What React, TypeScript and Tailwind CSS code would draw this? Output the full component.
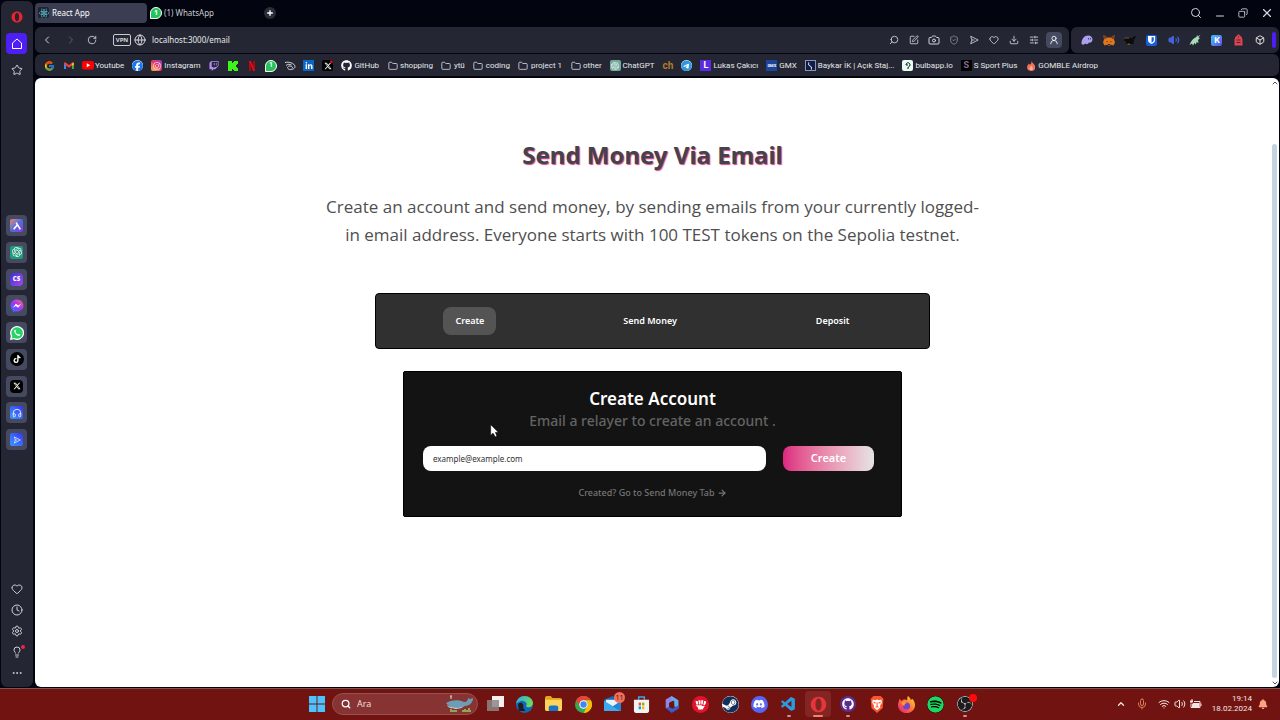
import type { ReactNode } from "react";
import { twMerge } from "tailwind-merge";
import {
  ArrowRight,
  Box,
  Camera,
  ChevronDown,
  ChevronLeft,
  ChevronRight,
  ChevronUp,
  Clock,
  Copy,
  Download,
  Ellipsis,
  Folder,
  Globe,
  Headphones,
  Heart,
  Lightbulb,
  Mic,
  Minus,
  Plus,
  RotateCw,
  Search,
  Settings,
  ShieldCheck,
  SlidersHorizontal,
  SquarePen,
  Star,
  UserRound,
  Volume2,
  Wifi,
  X,
} from "lucide-react";
import {
  FaBell,
  FaDiscord,
  FaFacebook,
  FaGithub,
  FaInstagram,
  FaLinkedinIn,
  FaReact,
  FaSpotify,
  FaSteam,
  FaTelegram,
  FaTiktok,
  FaTwitch,
  FaXTwitter,
} from "react-icons/fa6";
import { FcGoogle } from "react-icons/fc";
import { SiObsstudio, SiOpenai } from "react-icons/si";
import { VscVscode } from "react-icons/vsc";

function OperaLogo({ className }: { className: string }) {
  return (
    <svg viewBox="0 0 24 24" className={className}>
      <path
        fillRule="evenodd"
        fill="currentColor"
        d="M12 1C5.900 1 1 5.900 1 12s4.900 11 11 11 11-4.900 11-11S18.100 1 12 1Zm0 2.500c2.700 0 4.300 3.600 4.300 8.500s-1.600 8.500-4.300 8.500S7.700 16.900 7.700 12 9.300 3.500 12 3.500Z"
      />
    </svg>
  );
}

function WhatsAppBadge() {
  return (
    <span className="flex size-3 shrink-0 items-center justify-center rounded-full rounded-bl-sm border border-white bg-[#25c45a] text-[7px] leading-none font-bold text-white">
      1
    </span>
  );
}

function HomeIcon() {
  return (
    <svg viewBox="0 0 24 24" className="size-3" fill="none" stroke="currentColor" strokeWidth="2" strokeLinejoin="round">
      <path d="M12 2 3 10v11h18V10z" />
    </svg>
  );
}

function FlowIcon({ className }: { className: string }) {
  return (
    <svg viewBox="0 0 24 24" className={className} fill="none" stroke="currentColor" strokeWidth="2" strokeLinejoin="round">
      <path d="m4 3 18 9L4 21l3-9z" />
      <path d="M7 12h6" />
    </svg>
  );
}

function Gmail() {
  return (
    <svg viewBox="0 0 24 18" className="w-2.5">
      <path fill="#4285f4" d="M0 2v15h5V8z" />
      <path fill="#34a853" d="M24 2v15h-5V8z" />
      <path fill="#ea4335" d="M0 2.500 2.500 0 12 7l9.500-7L24 2.500V5l-12 9L0 5z" />
      <path fill="#fbbc04" d="m19 4 3-3 2 2v3l-5 4z" />
    </svg>
  );
}

function Youtube() {
  return (
    <svg viewBox="0 0 24 17" className="w-3 shrink-0">
      <rect width="24" height="17" rx="4" fill="#f00" />
      <path d="m9.500 4.500 7 4-7 4z" fill="#fff" />
    </svg>
  );
}

function Kick() {
  return (
    <svg viewBox="0 0 10 10" className="size-2.5">
      <path fill="#3df51a" d="M0 0h4v2h1V1h1V0h4v3H9v1H8v2h1v1h1v3H6V9H5V8H4v2H0z" />
    </svg>
  );
}

function Netflix() {
  return (
    <svg viewBox="0 0 12 20" className="h-2.5">
      <path fill="#b1060f" d="M0 0h4v20H0zM8 0h4v20H8z" />
      <path fill="#e50914" d="M0 0h4l8 20H8z" />
    </svg>
  );
}

function CloudScribble() {
  return (
    <svg viewBox="0 0 24 24" className="size-3 shrink-0" fill="none" stroke="#d8dae0" strokeWidth="2">
      <path d="M2 5c7-2 19 1 20 8 0 5-9 8-13 5s-1-6 3-6 6 3 4 5M4 11c3-3 8-3 11-1" />
    </svg>
  );
}

function Flame() {
  return (
    <svg viewBox="0 0 20 24" className="h-2.5">
      <path fill="#f2705b" d="M11 0c1 5 9 8 9 15s-5 9-10 9S0 21 0 15c0-4 3-6 4-9l3 3c3-2 4-5 4-9Z" />
      <path fill="#ffb18f" d="M10 11c1 3 4 4 4 7s-2 4-4 4-4-1-4-4 3-4 4-7Z" />
    </svg>
  );
}

function Tile({ className, children }: { className: string; children?: ReactNode }) {
  return (
    <span
      className={twMerge("flex size-[11px] shrink-0 items-center justify-center overflow-hidden rounded-xs", className)}
    >
      {children}
    </span>
  );
}

const folderIcon = <Folder className="size-2.5 text-[#d5d7dd]" />;

const bookmarks: { name: string; label?: string; icon: ReactNode }[] = [
  { name: "Google", icon: <FcGoogle className="size-3" /> },
  { name: "Gmail", icon: <Gmail /> },
  { name: "Youtube", label: "Youtube", icon: <Youtube /> },
  { name: "Facebook", icon: <Tile className="rounded-full bg-white text-[#1877f2]"><FaFacebook className="size-3" /></Tile> },
  {
    name: "Instagram",
    label: "Instagram",
    icon: (
      <Tile className="bg-linear-to-tr from-[#fdbb2d] via-[#e8305f] to-[#8a35c9] text-white">
        <FaInstagram className="size-2" />
      </Tile>
    ),
  },
  { name: "Twitch", icon: <FaTwitch className="size-2.5 text-[#b58cf5]" /> },
  { name: "Kick", icon: <Kick /> },
  { name: "Netflix", icon: <Netflix /> },
  { name: "WhatsApp", icon: <WhatsAppBadge /> },
  { name: "Cloud", icon: <CloudScribble /> },
  { name: "LinkedIn", icon: <Tile className="rounded-none bg-[#0a66c2] text-white"><FaLinkedinIn className="size-2" /></Tile> },
  {
    name: "X",
    icon: (
      <Tile className="relative bg-black text-white">
        <FaXTwitter className="size-2" />
        <i className="absolute top-0 right-0 size-[3px] rounded-full bg-red-600" />
      </Tile>
    ),
  },
  { name: "GitHub", label: "GitHub", icon: <FaGithub className="size-[11px] text-white" /> },
  { name: "shopping", label: "shopping", icon: folderIcon },
  { name: "ytü", label: "ytü", icon: folderIcon },
  { name: "coding", label: "coding", icon: folderIcon },
  { name: "project 1", label: "project 1", icon: folderIcon },
  { name: "other", label: "other", icon: folderIcon },
  { name: "ChatGPT", label: "ChatGPT", icon: <Tile className="bg-[#74aa9c] text-white"><SiOpenai className="size-2" /></Tile> },
  { name: "ch", icon: <span className="text-[10px] leading-none font-bold text-[#b57a2c]">ch</span> },
  { name: "Telegram", icon: <Tile className="rounded-full bg-white text-[#2f96e0]"><FaTelegram className="size-3" /></Tile> },
  { name: "Lukas Çakıcı", label: "Lukas Çakıcı", icon: <Tile className="rounded-none bg-[#5b2be0] text-[9px] font-bold text-white">L</Tile> },
  { name: "GMX", label: "GMX", icon: <Tile className="rounded-none bg-[#1c449b] text-[4px] font-bold text-white">GMX</Tile> },
  {
    name: "Baykar",
    label: "Baykar İK | Açık Staj...",
    icon: (
      <Tile className="rounded-none border border-[#8d95ad] bg-[#0e1c48]">
        <svg viewBox="0 0 10 10" className="size-2.5" fill="none" stroke="#fff">
          <path d="M3 1v3l3 2v3" />
        </svg>
      </Tile>
    ),
  },
  {
    name: "bulbapp.io",
    label: "bulbapp.io",
    icon: (
      <Tile className="bg-[#e9fbf5]">
        <svg viewBox="0 0 10 10" className="size-2.5" fill="none" stroke="#0b1512">
          <path d="M3 4c0-3 4-3 4 0 0 2-2 1-2 3v1M3 4h2" />
        </svg>
      </Tile>
    ),
  },
  { name: "S Sport Plus", label: "S Sport Plus", icon: <Tile className="rounded-none bg-black text-[9px] font-bold text-[#8b6c96]">S</Tile> },
  { name: "GOMBLE Airdrop", label: "GOMBLE Airdrop", icon: <Flame /> },
];

const sideApps: { name: string; icon: ReactNode }[] = [
  {
    name: "Aria",
    icon: (
      <Tile className="size-[13px] bg-linear-to-br from-[#f27a4f] via-[#4d6ae0] to-[#8a2be2]">
        <svg viewBox="0 0 12 12" className="size-2.5" fill="none" stroke="#fff" strokeWidth="2">
          <path d="m5 2 5 8M7 4l-5 6" />
        </svg>
      </Tile>
    ),
  },
  { name: "ChatGPT", icon: <Tile className="size-[13px] bg-[#1f9a7b] text-white"><SiOpenai className="size-2.5" /></Tile> },
  {
    name: "ChatSonic",
    icon: (
      <Tile className="size-[13px] rounded-sm bg-linear-to-br from-[#3a2bd8] to-[#a545e8] text-[6px] font-black text-white">CS</Tile>
    ),
  },
  {
    name: "Messenger",
    icon: (
      <svg viewBox="0 0 24 24" className="size-3.5">
        <defs>
          <linearGradient id="messenger" x1="0" y1="1" x2="1" y2="0">
            <stop offset="0" stopColor="#1684ff" />
            <stop offset="0.500" stopColor="#a033ff" />
            <stop offset="1" stopColor="#ff6a68" />
          </linearGradient>
        </defs>
        <path fill="url(#messenger)" d="M12 1C5.500 1 1 5.700 1 11.500c0 3.500 1.500 6 4 8V23l3.500-2c1 .3 2.200.5 3.500.5 6.500 0 11-4.500 11-10S18.500 1 12 1Z" />
        <path d="m5 15 5-7 4 3 5-3-5 7-4-3z" fill="#fff" />
      </svg>
    ),
  },
  {
    name: "WhatsApp",
    icon: (
      <svg viewBox="0 0 28 28" className="size-3.5">
        <path fill="#fff" d="M14 0a14 14 0 1 1-6 26.500L0 28l1.500-8A14 14 0 0 1 14 0Z" />
        <path fill="#25d366" d="M14 2.500a11.500 11.500 0 1 1-5.500 21.500L3.500 25l1-5A11.500 11.500 0 0 1 14 2.500Z" />
        <path fill="#fff" d="M9 8c1-1 2-1 3 2 0 1-1 1-1 2 1 2 3 4 5 5 1 0 1-1 2-1 3 1 3 2 2 3-4 4-14-6-11-11Z" />
      </svg>
    ),
  },
  { name: "TikTok", icon: <Tile className="size-3.5 rounded-full bg-black text-white"><FaTiktok className="size-2" /></Tile> },
  { name: "X", icon: <Tile className="size-[13px] rounded-sm bg-black text-white"><FaXTwitter className="size-2" /></Tile> },
  { name: "Player", icon: <Tile className="size-[13px] bg-linear-to-tr from-[#3f96ff] to-[#3b28f0] text-white"><Headphones className="size-2.5" /></Tile> },
  { name: "Flow", icon: <Tile className="size-[13px] bg-linear-to-tr from-[#3f96ff] to-[#3b28f0] text-white"><FlowIcon className="size-2" /></Tile> },
];

function Sidebar() {
  return (
    <aside className="mt-px flex w-8 shrink-0 flex-col items-center rounded-md bg-[#242733] pr-px text-[#cfd1d8]">
      <button aria-label="Opera" className="mt-2.5">
        <OperaLogo className="size-3 text-[#f0222e]" />
      </button>
      <button aria-label="Home" className="mt-2.5 flex size-[21px] items-center justify-center rounded-sm bg-[#4d1ff5] text-white">
        <HomeIcon />
      </button>
      <button aria-label="Favourites" className="mt-2.5">
        <Star className="size-3" />
      </button>
      <nav aria-label="Apps" className="mt-[139px] flex h-[235px] flex-col justify-between">
        {sideApps.map((app) => (
          <button key={app.name} aria-label={app.name} className="flex size-[21px] items-center justify-center rounded-sm bg-[#464a60]">
            {app.icon}
          </button>
        ))}
      </nav>
      <div className="mt-auto mb-2 flex flex-col items-center gap-[9px]">
        <button aria-label="Likes"><Heart className="size-3" /></button>
        <button aria-label="History"><Clock className="size-3" /></button>
        <button aria-label="Settings"><Settings className="size-3" /></button>
        <button aria-label="Tips" className="relative">
          <Lightbulb className="size-3" />
          <span className="absolute -top-px -right-0.5 size-1 rounded-full bg-[#fa1e4e]" />
        </button>
        <button aria-label="More"><Ellipsis className="size-3" /></button>
      </div>
    </aside>
  );
}

function TabBar() {
  return (
    <div className="flex h-[25px] items-center text-[8px] text-[#c9cbd2]">
      <button className="flex h-5 w-28 items-center gap-[3px] rounded-sm bg-[#3b3e52] px-[3px] text-white">
        <Tile className="bg-[#20232a] text-[#61dafb]"><FaReact className="size-2.5" /></Tile>
        React App
      </button>
      <button className="flex w-28 items-center gap-0.5 px-[3px]">
        <WhatsAppBadge />
        (1) WhatsApp
      </button>
      <button aria-label="New tab" className="ml-[5px] flex size-3 items-center justify-center rounded-full bg-[#2a2d38] text-white">
        <Plus className="size-2" strokeWidth={4} />
      </button>
      <div className="ml-auto flex items-center gap-3 pr-[5px] text-[#d5d7dd]">
        <button aria-label="Search tabs"><Search className="size-3" /></button>
        <button aria-label="Minimize"><Minus className="mt-1.5 size-3" /></button>
        <button aria-label="Restore"><Copy className="size-2.5 rotate-90" /></button>
        <button aria-label="Close"><X className="size-3.5" strokeWidth={2} /></button>
      </div>
    </div>
  );
}

const pageActions = [
  { name: "Zoom", icon: <Search className="size-2.5 -scale-x-100" /> },
  { name: "Edit", icon: <SquarePen className="size-2.5" /> },
  { name: "Snapshot", icon: <Camera className="size-3" /> },
  { name: "Shield", icon: <ShieldCheck className="size-2.5 text-[#8f929c]" /> },
  { name: "Flow", icon: <FlowIcon className="size-2.5" /> },
  { name: "Heart", icon: <Heart className="size-2.5" /> },
  { name: "Downloads", icon: <Download className="size-2.5" /> },
  { name: "Easy setup", icon: <SlidersHorizontal className="size-2.5" /> },
];

const extensions = [
  {
    name: "Phantom",
    icon: (
      <svg viewBox="0 0 24 20" className="w-3">
        <path fill="#ab9ff2" d="M1 17C1 8 7 1 14 1c6 0 9 4 9 8 0 5-4 7-7 6-2 3-5 5-7 2-3 3-8 3-8 0Z" />
        <path d="M15 6v3m4-3v3" stroke="#242733" strokeWidth="1.500" />
      </svg>
    ),
  },
  {
    name: "MetaMask",
    icon: (
      <svg viewBox="0 0 24 22" className="w-3">
        <path fill="#e2761b" d="m1 0 8 5h6l8-5-1 9 2 6-3 6-6-2-1 2h-4l-1-2-6 2-3-6 2-6z" />
        <path fill="#763d16" d="m1 0 8 5-6 4zm22 0-8 5 6 4z" />
        <path fill="#233447" d="m6 12 4 1-1 2zm12 0-4 1 1 2zM10 18h4v2h-4z" />
      </svg>
    ),
  },
  {
    name: "Pot",
    icon: (
      <svg viewBox="0 0 24 20" className="w-3">
        <path fill="#0c0c0e" d="M2 6h14l7-5v5l-3 3-1 9H5L3 12H0z" />
        <path fill="#8a4a22" d="M1 5h9v2H1zM7 17h5v3H7z" />
      </svg>
    ),
  },
  {
    name: "Bitwarden",
    icon: (
      <Tile className="bg-[#175ddc]">
        <svg viewBox="0 0 16 18" className="h-2">
          <path fill="#fff" d="M0 0h16v9c0 5-4 7-8 9-4-2-8-4-8-9z" />
          <path fill="#175ddc" d="M8 3h5v6c0 3-2 4-5 6z" />
        </svg>
      </Tile>
    ),
  },
  { name: "Volume", icon: <Volume2 className="size-3 fill-[#4662d8] text-[#4662d8]" /> },
  {
    name: "Rabbit",
    icon: (
      <svg viewBox="0 0 24 24" className="size-3">
        <path fill="#a6dcb8" d="m23 1-5 4-2-3-1 4C8 9 4 14 1 22l5-3 2 4 3-5 3 3 1-5 4 2-1-6 4-4-3-1z" />
      </svg>
    ),
  },
  { name: "Keplr", icon: <Tile className="bg-linear-to-br from-[#3bc5f7] to-[#5a44e8] text-[9px] font-bold text-white">K</Tile> },
  {
    name: "Tag",
    icon: (
      <svg viewBox="0 0 18 24" className="h-3">
        <path fill="#d94652" d="m9 0 7 7v3h1v13H1V10h1V7z" />
        <path d="M5 12h8M5 17h8M9 5v2" stroke="#5c1c28" strokeWidth="2" />
      </svg>
    ),
  },
  { name: "Extensions", icon: <Box className="size-2.5 text-white" /> },
];

function AddressBar() {
  return (
    <div className="mt-0.5 flex h-[26px] gap-0.5 text-[#d5d7dd]">
      <div className="flex flex-1 items-center rounded-md bg-[#242733] pr-[7px]">
        <button aria-label="Back" className="ml-1.5"><ChevronLeft className="size-3" /></button>
        <button aria-label="Forward" className="ml-3 text-[#5f626e]"><ChevronRight className="size-3" /></button>
        <button aria-label="Reload" className="ml-2.5"><RotateCw className="size-2.5" /></button>
        <span className="ml-4 flex h-3 w-[18px] items-center justify-center rounded-xs border border-[#c8cad2] text-[6px] font-bold">VPN</span>
        <Globe className="ml-[3px] size-3" strokeWidth={2} />
        <input
          aria-label="Address"
          defaultValue="localhost:3000/email"
          className="ml-1.5 min-w-0 flex-1 bg-transparent text-[8px] text-[#e6e7eb] outline-none"
        />
        <div className="flex items-center">
          {pageActions.map((action) => (
            <button key={action.name} aria-label={action.name} className="flex w-5 justify-center">
              {action.icon}
            </button>
          ))}
          <button aria-label="Profile" className="ml-0.5 flex size-4 items-center justify-center rounded-sm bg-[#464a60] text-white">
            <UserRound className="size-2.5" />
          </button>
        </div>
      </div>
      <div className="flex w-[208px] items-center justify-between rounded-md bg-[#242733] pr-[3px] pl-1.5">
        {extensions.map((extension) => (
          <button key={extension.name} aria-label={extension.name} className="flex w-5 justify-center">
            {extension.icon}
          </button>
        ))}
        <span className="h-4 w-1 rounded-xs bg-[#4d1ff5]" />
      </div>
    </div>
  );
}

function BookmarkBar() {
  return (
    <nav
      aria-label="Bookmarks"
      className="mt-px flex h-[22px] items-center gap-2 rounded-md bg-[#242733] pt-px pl-[9px] font-[Roboto,sans-serif] text-[8px] whitespace-nowrap text-[#e6e7eb]"
    >
      {bookmarks.map((bookmark) => (
        <a key={bookmark.name} href="#" aria-label={bookmark.name} className="flex items-center gap-0.5">
          <span className="flex w-[11px] justify-center">{bookmark.icon}</span>
          {bookmark.label}
        </a>
      ))}
    </nav>
  );
}

function EmailPage() {
  return (
    <main className="flex min-w-0 flex-1 flex-col items-center px-4 pt-[59px] text-center">
      <h1 className="text-[24px] leading-9 font-bold text-[#44424a] [text-shadow:1px_1px_1px_#d9468a]">
        Send Money Via Email
      </h1>
      <p className="mt-5 max-w-[680px] font-['Open_Sans',sans-serif] text-[17px] leading-7 text-[#4f4f4f]">
        Create an account and send money, by sending emails from your currently logged-
        <br />
        in email address. Everyone starts with 100 TEST tokens on the Sepolia testnet.
      </p>

      <nav className="mt-11 flex h-14 w-full max-w-[555px] items-center justify-around rounded-sm border border-black bg-[#303030] px-2.5 text-[9px] font-semibold text-white">
        <button className="h-7 rounded-lg bg-[#545454] px-3">Create</button>
        <button className="h-7 rounded-lg px-3">Send Money</button>
        <button className="h-7 rounded-lg px-3">Deposit</button>
      </nav>

      <section className="mt-[22px] w-full max-w-[499px] rounded-xs border border-black bg-[#131313] px-[19px] pt-[17px] pb-3.5">
        <h2 className="text-[17px] leading-5 font-semibold text-white">Create Account</h2>
        <p className="text-[14px] leading-6 font-medium text-[#636363]">Email a relayer to create an account .</p>
        <form className="mt-[13px] flex items-center gap-[17px] pr-2" onSubmit={(e) => e.preventDefault()}>
          <input
            type="email"
            aria-label="Email address"
            placeholder="example@example.com"
            className="h-[25px] min-w-0 flex-1 rounded-lg bg-white px-2.5 text-[8px] text-black outline-none placeholder:text-[#303030]"
          />
          <button className="h-[25px] w-[91px] rounded-lg bg-linear-to-r from-[#dc2680] to-[#e4e4e4] text-[11px] font-semibold text-white">
            Create
          </button>
        </form>
        <a href="#send" className="mt-3.5 inline-flex items-center gap-0.5 text-[9px] leading-4 font-medium text-[#757575]">
          Created? Go to Send Money Tab <ArrowRight className="size-2.5" strokeWidth={3} />
        </a>
      </section>
    </main>
  );
}

function WindowsLogo() {
  return (
    <svg viewBox="0 0 17 17" className="size-4">
      <path fill="#4cc2ff" d="M0 0h8v8H0zM9 0h8v8H9zM0 9h8v8H0zM9 9h8v8H9z" />
    </svg>
  );
}

function Whale() {
  return (
    <svg viewBox="0 0 28 18" className="w-7">
      <path fill="#6d9db5" d="M1 8c4-3 13-4 18-1 3 0 4-2 4-4l2 1 3-1c0 4-3 8-8 8-6 3-15 3-19-3Z" />
      <path fill="#b9d2dc" d="M2 10c4 3 12 4 17 1-3 4-15 4-17-1Z" />
      <path stroke="#e7d6d6" d="M6 4V1M5 1h2" />
      <path stroke="#8fa653" strokeWidth="2" d="M5 16h7m5 0h9M6 14v3m14-3v3m4-4v3" />
    </svg>
  );
}

function Edge() {
  return (
    <svg viewBox="0 0 24 24" className="size-[17px]">
      <defs>
        <linearGradient id="edge" x1="0" x2="1" y1="0" y2="0.500">
          <stop offset="0" stopColor="#2aa9ea" />
          <stop offset="1" stopColor="#6bdc5a" />
        </linearGradient>
      </defs>
      <circle cx="12" cy="12" r="12" fill="#1267b8" />
      <path fill="url(#edge)" d="M0 11C1 4 6 0 12 0c8 0 12 6 12 10s-3 6-6 6c-4 0-4-2-3-4S11 6 7 7s-6 3-7 4Z" />
      <path fill="#241b20" d="M3 13c0-3 3-4 5-3s3 4 2 6l3 5H4z" />
    </svg>
  );
}

function Explorer() {
  return (
    <svg viewBox="0 0 18 16" className="w-[17px]">
      <path fill="#e6a51e" d="M0 2c0-1 1-2 2-2h4l2 2h8c1 0 2 1 2 2v3H0z" />
      <path fill="#ffd45b" d="M0 4h18v10c0 1-1 2-2 2H2c-1 0-2-1-2-2z" />
      <path fill="#1975c5" d="M4 16v-4c0-1 1-2 2-2h6c1 0 2 1 2 2v4z" />
    </svg>
  );
}

function Chrome() {
  return (
    <svg viewBox="0 0 24 24" className="size-[17px]">
      <circle cx="12" cy="12" r="12" fill="#34a853" />
      <path fill="#ea4335" d="M1.600 6A12 12 0 0 1 22.400 6H12a6 6 0 0 0-5.200 9z" />
      <path fill="#fbbc04" d="M22.400 6A12 12 0 0 1 12 24l5.200-9A6 6 0 0 0 12 6z" />
      <circle cx="12" cy="12" r="6" fill="#fff" />
      <circle cx="12" cy="12" r="4.500" fill="#4285f4" />
    </svg>
  );
}

function Mail() {
  return (
    <span className="relative">
      <svg viewBox="0 0 18 16" className="w-[17px]">
        <path fill="#1769b5" d="M0 4 9 0l9 4v12H0z" />
        <path fill="#e8f4fd" d="M2 4h14v4l-7 4-7-4z" />
        <path fill="#3fa9ee" d="m0 5 18 11H0z" />
        <path fill="#2387d8" d="m18 5-9 6 9 5z" />
      </svg>
      <span className="absolute -top-1 -right-1 flex size-[11px] items-center justify-center rounded-full bg-[#f3705c] text-[7px] text-[#40100e]">
        11
      </span>
    </span>
  );
}

function Store() {
  return (
    <svg viewBox="0 0 18 18" className="size-[17px]">
      <path d="M6 4V1h6v3" fill="none" stroke="#38a8e8" strokeWidth="1.500" />
      <path fill="#f3f3f3" d="M1 4h16v12c0 1-1 2-2 2H3c-1 0-2-1-2-2z" />
      <path fill="#f25022" d="M6 7h2.500v3H6z" />
      <path fill="#7fba00" d="M9.500 7H12v3H9.500z" />
      <path fill="#00a4ef" d="M6 11h2.500v3H6z" />
      <path fill="#ffb900" d="M9.500 11H12v3H9.500z" />
    </svg>
  );
}

function Office() {
  return (
    <svg viewBox="0 0 18 20" className="h-[17px]">
      <path fill="#8f86e6" d="m9 0-7 4v10l4 2V8l6-3z" />
      <path fill="#5fb0f0" d="m9 0 8 5v10l-5-3V6L8 4z" />
      <path fill="#3a5cc8" d="m2 14 7 6 8-5v-4l-7 4-4-2z" />
      <path fill="#711411" d="m9 7 3 2v3l-3 1-3-1V9z" />
    </svg>
  );
}

function Fist() {
  return (
    <svg viewBox="0 0 24 24" className="size-[17px]">
      <circle cx="12" cy="12" r="12" fill="#e3132c" />
      <path fill="#fff" d="M5 7h3l1 5H6zM9 6h3v6h-2zM13 6h3l-1 6h-2zM17 7h2l1 2-2 4h-2zM5 13h8l2 1h3l-3 5H9l-1-3z" />
    </svg>
  );
}

function Firefox() {
  return (
    <svg viewBox="0 0 24 24" className="size-[17px]">
      <defs>
        <linearGradient id="firefox" x1="1" x2="0" y1="0" y2="1">
          <stop offset="0" stopColor="#ffe226" />
          <stop offset="0.500" stopColor="#ff7139" />
          <stop offset="1" stopColor="#e3157f" />
        </linearGradient>
      </defs>
      <path fill="url(#firefox)" d="M14 0c4 3 4 5 4 6l2-2c3 3 4 6 4 9 0 6-5 11-12 11S0 19 0 13c0-4 2-6 2-9l3 3 3-2c3 0 4 1 5 1 0-2 0-4 1-6Z" />
      <circle cx="12" cy="14" r="5" fill="#7242d0" />
      <path fill="#ff9a2c" d="M5 9c4-2 6 0 8 1-3 0-4 2-4 4-2-1-4-2-4-5Z" />
    </svg>
  );
}

const taskbarApps: { name: string; icon: ReactNode; running?: boolean; active?: boolean }[] = [
  {
    name: "Task view",
    icon: (
      <svg viewBox="0 0 17 16" className="w-[17px]">
        <path fill="#f4f0f0" d="M5 0h12v11H5z" />
        <path fill="#8e8585" d="M0 4h12v11H0z" opacity="0.850" />
      </svg>
    ),
  },
  { name: "Edge", icon: <Edge /> },
  { name: "Explorer", icon: <Explorer /> },
  { name: "Chrome", icon: <Chrome /> },
  { name: "Mail", icon: <Mail /> },
  { name: "Store", icon: <Store /> },
  { name: "Microsoft 365", icon: <Office /> },
  { name: "Riot", icon: <Fist /> },
  { name: "Steam", icon: <Tile className="size-[17px] rounded-full bg-white text-[#12305c]"><FaSteam className="size-[17px]" /></Tile> },
  { name: "Discord", icon: <Tile className="size-[17px] rounded-full bg-[#5865f2] text-white"><FaDiscord className="size-3" /></Tile> },
  { name: "VS Code", icon: <VscVscode className="size-[17px] text-[#2a9be0]" />, running: true },
  { name: "Opera", icon: <OperaLogo className="size-[17px] text-[#e8353c]" />, active: true },
  { name: "GitHub", icon: <Tile className="size-4 rounded-full bg-[#5c2d91] text-white"><FaGithub className="size-3" /></Tile>, running: true },
  {
    name: "Brave",
    icon: (
      <svg viewBox="0 0 20 24" className="h-[17px]">
        <path fill="#fb542b" d="m5 0h10l4 4-1 13-8 7-8-7L1 4z" />
        <path fill="#fff" d="m4 5 3 1 3-1 3 1 3-1 1 4-3 5 1 2-5 4-5-4 1-2-3-5z" />
        <path stroke="#fb542b" strokeWidth="1.500" fill="none" d="m5 9 3 1m7-1-3 1m-2-1v5m-2 2 2-1 2 1" />
      </svg>
    ),
  },
  { name: "Firefox", icon: <Firefox /> },
  { name: "Spotify", icon: <Tile className="size-[17px] rounded-full bg-black text-[#1ed760]"><FaSpotify className="size-[17px]" /></Tile> },
  {
    name: "OBS",
    icon: (
      <span className="relative">
        <Tile className="size-4 rounded-full bg-[#1d1b1e] text-[#dcdcdc]"><SiObsstudio className="size-4" /></Tile>
        <span className="absolute -top-0.5 -right-1 size-2 rounded-full bg-[#ff0a0a]" />
      </span>
    ),
    running: true,
  },
];

function Taskbar() {
  return (
    <footer className="grid h-8 grid-cols-[1fr_auto_1fr] items-center border-t border-[#7d5652] bg-[#711411] pb-px text-white">
      <span />
      <div className="flex items-center">
        <button aria-label="Start" className="flex w-[30px] justify-center"><WindowsLogo /></button>
        <label className="flex h-[22px] w-[146px] items-center rounded-full border border-[#96504e] bg-[#873333] pr-1 pl-2 text-[9px]">
          <Search className="size-2.5 shrink-0" strokeWidth={3} />
          <input aria-label="Ara" placeholder="Ara" className="ml-1.5 min-w-0 flex-1 bg-transparent outline-none placeholder:text-[#f0dcdc]" />
          <Whale />
        </label>
        <div className="ml-1 flex w-[496px] justify-between">
          {taskbarApps.map((app) => (
            <button
              key={app.name}
              aria-label={app.name}
              className={`relative flex h-[26px] w-[26px] items-center justify-center rounded-sm ${app.active ? "bg-[#832522]" : ""}`}
            >
              {app.icon}
              {app.running && <span className="absolute bottom-0 h-0.5 w-1 rounded-full bg-[#c99390]" />}
              {app.active && <span className="absolute bottom-0 h-0.5 w-2.5 rounded-full bg-[#f0866a]" />}
            </button>
          ))}
        </div>
      </div>
      <div className="flex items-center justify-end pr-3 text-[#f4e4e2]">
        <ChevronUp className="size-2.5" strokeWidth={3} />
        <Mic className="ml-2.5 size-3 text-[#e07a5a]" />
        <Wifi className="ml-2.5 size-3" />
        <Volume2 className="ml-1 size-3" />
        <svg viewBox="0 0 24 20" className="ml-1 w-3">
          <path fill="none" stroke="currentColor" strokeWidth="2" d="M8 5h12v12H2V9m20 0v5" />
          <path fill="currentColor" d="M6 8h13v8H4v-5zM3 0v3H0v3c0 2 5 2 6 0V3H5V0z" />
        </svg>
        <div className="ml-2.5 text-right font-[Roboto,sans-serif] text-[8px] leading-[10px]">
          <div>19:14</div>
          <div>18.02.2024</div>
        </div>
        <FaBell className="ml-1.5 size-2.5 text-[#ffa184]" />
      </div>
    </footer>
  );
}

export default function App() {
  return (
    <div className="flex min-h-screen flex-col bg-[#02040f] font-['Noto_Sans','Open_Sans',sans-serif]">
      <div className="flex flex-1 gap-0.5 px-px pb-px">
        <Sidebar />
        <div className="flex min-w-0 flex-1 flex-col">
          <TabBar />
          <AddressBar />
          <BookmarkBar />
          <div className="relative mt-0.5 flex flex-1 rounded-md bg-white">
            <EmailPage />
            <div className="flex w-[9px] flex-col items-center pt-px text-[#505050]">
              <ChevronUp className="size-2" strokeWidth={3} />
              <div className="mt-[57px] w-[5px] flex-1 rounded-full bg-[#c3d3e0]" />
              <ChevronDown className="mt-px size-2" strokeWidth={3} />
            </div>
            <svg viewBox="0 0 12 18" className="absolute top-[346px] left-[455px] w-[9px]">
              <path d="M1 1v14l3-3 3 5 2-1-2-5h4z" fill="#fff" stroke="#000" strokeWidth="0.500" />
            </svg>
          </div>
        </div>
      </div>
      <Taskbar />
    </div>
  );
}
